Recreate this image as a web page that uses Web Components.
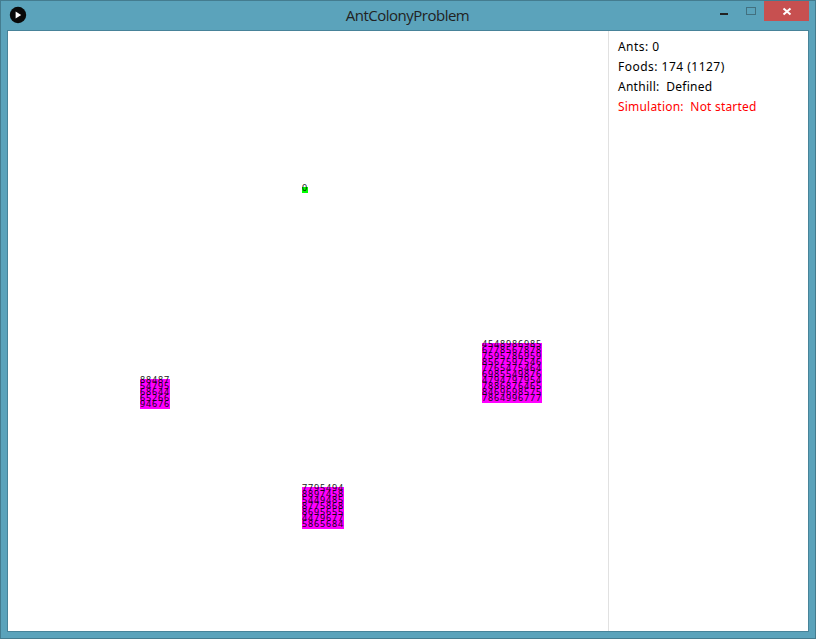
<!DOCTYPE html>
<html lang="en"><head><meta charset="utf-8"><title>AntColonyProblem</title>
<style>html,body{margin:0;height:100%;overflow:hidden}</style></head><body>
<app-window caption="AntColonyProblem">
  <colony-map>
    <map-patch style="left:294px;top:156px;--fill:#00ff00" rows="0"></map-patch>
    <map-patch style="left:132px;top:348px" rows="88487 54795 68644 65266 94676"></map-patch>
    <map-patch style="left:474px;top:312px" rows="4548986985 6778567878 7595786959 8567597546 7765475464 6985549876 4794797954 7886876465 8469698575 7864996777"></map-patch>
    <map-patch style="left:294px;top:456px" rows="7795494 8897458 5449485 8775868 8695655 4479677 5865684"></map-patch>
  </colony-map>
  <status-panel>
    <status-line style="letter-spacing:.45px">Ants: 0</status-line>
    <status-line style="letter-spacing:.48px">Foods: 174 (1127)</status-line>
    <status-line style="letter-spacing:.27px">Anthill:&nbsp; Defined</status-line>
    <status-line style="letter-spacing:.2px;color:#f00">Simulation:&nbsp; Not started</status-line>
  </status-panel>
</app-window>
<script>
const define = (name, html, setup) => customElements.define(name, class extends HTMLElement {
  constructor() {
    super();
    this.attachShadow({mode: 'open'}).innerHTML = html;
  }
  connectedCallback() { if (setup) setup(this, this.shadowRoot); }
});
define('title-bar', `<style>
  :host{display:grid;grid-template-columns:100px 1fr 100px;height:29px;font:15px/29px "Open Sans","Noto Sans",sans-serif;color:#222}
  .logo{display:block;margin:5px 0 0 8px}
  .title{text-align:center;letter-spacing:-.5px;white-space:nowrap;padding-left:5px}
  .buttons{justify-self:end;display:block}
</style>
<svg class="logo" width="18" height="18" viewBox="0 0 18 18"><circle cx="9" cy="9" r="8.2" fill="#090909"/><path d="M6.6 5.4L12.2 9L6.6 12.6Z" fill="#fff"/></svg>
<div class="title"></div>
<svg class="buttons" width="96" height="29" viewBox="0 0 96 29" shape-rendering="crispEdges"><path d="M7 12h8v2H7z" fill="#222"/><rect x="33.5" y="6.5" width="9" height="7" fill="none" stroke="#42707f"/><path d="M51 0h45v20H51z" fill="#c75050"/><path d="M70.5 7.5l7 6M77.5 7.5l-7 6" stroke="#fff" stroke-width="2" shape-rendering="auto"/></svg>`,
(el, root) => root.querySelector('.title').textContent = el.getAttribute('caption'));
define('app-window', `<style>
  :host{display:flex;flex-direction:column;box-sizing:border-box;width:816px;height:639px;background:#5ba3bb;border:1px solid #447c8f}
  .client{display:flex;width:800px;height:600px;margin:0 6px;border:1px solid #478399;background:#fff}
  title-bar{flex:none}
</style><title-bar></title-bar><div class="client"><slot></slot></div>`,
(el, root) => {
  const bar = document.createElement('title-bar');
  bar.setAttribute('caption', el.getAttribute('caption'));
  bar.style.marginRight = '6px';
  root.querySelector('title-bar').replaceWith(bar);
});
define('colony-map', `<style>:host{display:block;position:relative;width:600px;height:600px;flex:none;border-right:1px solid #e1e1e1}</style><slot></slot>`);
define('status-panel', `<style>:host{display:flex;flex-direction:column;flex:1;padding:6px 0 0 9px}</style><slot></slot>`);
define('status-line', `<style>:host{display:block;height:20px;font:12px/20px "Noto Sans","Open Sans",sans-serif;color:#000;white-space:nowrap}</style><slot></slot>`);
// Each cell is 6px square; its amount is written over the upper cell edge.
define('map-patch', `<style>
  :host{display:block;position:absolute}
  div{height:6px;background:var(--fill,#ff00ff)}
  span{display:block;position:relative;top:-3px;height:6px;font:9px/7px "Noto Sans",sans-serif;letter-spacing:.852px;color:#000;white-space:pre;opacity:.9}
</style>`, (el, root) => {
  for (const row of el.getAttribute('rows').split(' ')) {
    const line = document.createElement('div');
    const text = document.createElement('span');
    line.style.width = row.length * 6 + 'px';
    text.textContent = row;
    line.append(text);
    root.append(line);
  }
});
</script></body></html>
